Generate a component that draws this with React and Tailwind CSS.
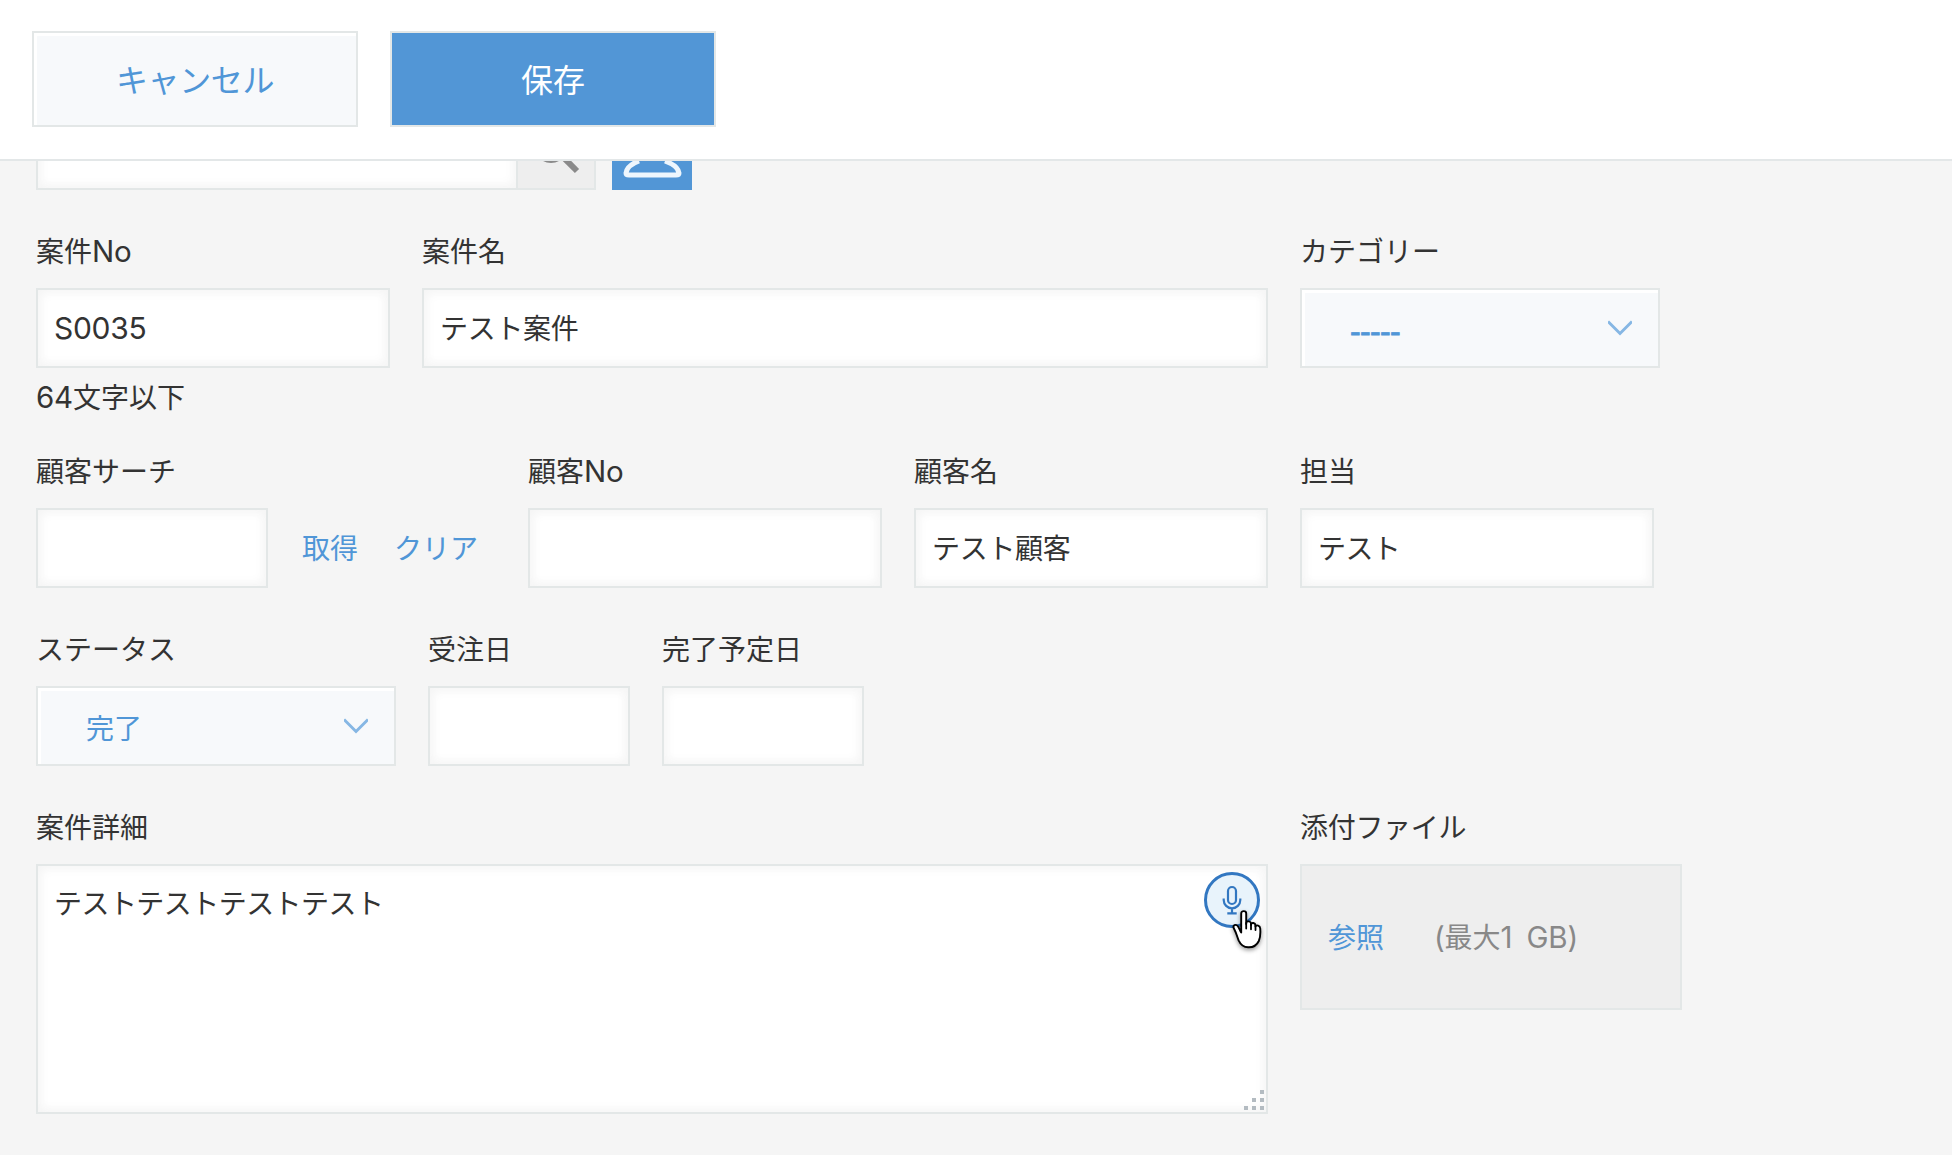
import clsx from 'clsx';

const box = 'border-2 border-[#e3e7e7] rounded-none outline-none';
const inputShadow = 'bg-white shadow-[inset_2px_2px_12px_#f5f5f5,inset_-2px_-2px_12px_#f5f5f5]';

function Field({ label, width, children }) {
  return (
    <div className={clsx('shrink-0', width)}>
      <label className="block h-[42px] leading-[40px] mb-4 whitespace-nowrap">{label}</label>
      {children}
    </div>
  );
}

function TextInput({ value = '', className }) {
  return (
    <input
      type="text"
      defaultValue={value}
      className={clsx(box, inputShadow, 'block w-full h-20 px-4', className || 'pb-[2px]')}
    />
  );
}

function Chevron() {
  return (
    <svg width="24" height="16" viewBox="0 0 24 16" fill="none" className="shrink-0">
      <path d="M0 1.5L12 13.5L24 1.5" stroke="#86b7e4" strokeWidth="3" />
    </svg>
  );
}

function Select({ children }) {
  return (
    <button className={clsx(box, 'w-full h-20 pl-12 pr-[26px] flex items-center justify-between bg-[#f7f9fb] text-[#5096d7] shadow-[inset_3px_3px_1px_#fff]')}>
      {children}
      <Chevron />
    </button>
  );
}

function Latin({ children }) {
  return <span className="font-['Inter'] text-[29.5px] tracking-[-0.2px] leading-none">{children}</span>;
}

function Mic() {
  return (
    <div className="absolute top-2 right-2 w-14 h-14 rounded-full border-[3px] border-[#3277c1] bg-[#e8f3fb]">
      <svg viewBox="0 0 50 50" className="w-full h-full" fill="none" stroke="#3277c1" strokeWidth="2.2">
        <rect x="21" y="12" width="8" height="17" rx="4" />
        <path d="M16.7 23.5V25a8.3 8.3 0 0 0 16.6 0V23.5M25 33.3V38.3M20.3 38.3H29.7" />
      </svg>
    </div>
  );
}

function HandCursor() {
  return (
    <svg
      viewBox="0 0 30 39"
      className="absolute top-[46px] right-[6px] w-[30px] h-[39px] overflow-visible drop-shadow-[0_2px_2px_rgba(0,0,0,0.4)]"
    >
      <path
        d="M9.2 22.5V3.4C9.2.3 14.2.3 14.2 3.4V14V12.6C14.8 10.7 18.8 11 19 13.4V15V14.2C19.7 12.3 23.2 12.8 23.5 15V16.4C24.5 14.6 28 15.4 28.2 18.2C28.6 22.8 28.6 27 26.8 31C24.6 35.6 20.8 37.5 16.2 37.3C11.4 37 8.5 34.5 6.6 30.3C5.2 27 4.6 23.6 1.8 18.3C.4 15.2 4 13.7 5.9 16.2C7.4 18.4 8 20.6 9.2 22.5Z"
        fill="#fff"
        stroke="#000"
        strokeWidth="1.9"
        strokeLinejoin="round"
      />
      <path d="M14.2 13V18.5M19 14V19.3M23.5 15.5V20" stroke="#000" strokeWidth="1.8" strokeLinecap="round" />
    </svg>
  );
}

// grip dots in the corner of the textarea
function ResizeGrip() {
  return (
    <svg viewBox="0 0 20 20" width="20" height="20" fill="#b3bbc1" className="absolute right-[4px] bottom-[4px]">
      <path d="M16 0h4v4h-4zM8 8h4v4H8zM16 8h4v4h-4zM0 16h4v4H0zM8 16h4v4H8zM16 16h4v4h-4z" />
    </svg>
  );
}

export default function App() {
  return (
    <div className="w-[1952px] h-[1155px] flex flex-col overflow-hidden bg-[#f5f5f5] text-[#333] text-[28px] font-['Noto_Sans_CJK_JP',sans-serif]">
      <header className="h-[161px] shrink-0 bg-white border-b-2 border-[#e3e7e8] flex gap-8 pl-8 pt-[31px]">
        <button className={clsx(box, 'w-[326px] h-24 pb-[2px] bg-[#f7f9fb] text-[#5096d7] text-[32px] tracking-[-0.4px] shadow-[inset_3px_3px_1px_#fff]')}>
          キャンセル
        </button>
        <button className={clsx(box, 'w-[326px] h-24 pb-[2px] bg-[#5296d6] text-white text-[32px]')}>保存</button>
      </header>

      <main className="flex-1 min-h-0 overflow-hidden pl-9">
        {/* lookup row, scrolled half way under the header */}
        <div className="-mt-[51px] flex gap-4">
          <div className="flex">
            <div className={clsx(box, inputShadow, 'w-[482px] h-20')} />
            <div className="w-[78px] h-20 bg-[#eee] border-2 border-l-0 border-[#e3e7e7]">
              <svg viewBox="0 0 76 76" className="w-full h-full" fill="none" stroke="#8a8a8a" strokeWidth="5">
                <circle cx="33" cy="34.5" r="14" />
                <path d="M43 43L59 59" strokeWidth="6" />
              </svg>
            </div>
          </div>
          <div className="w-20 h-20 bg-[#5296d6]">
            <svg viewBox="0 0 80 80" className="w-full h-full" fill="none" stroke="#eef6fd" strokeWidth="5">
              <circle cx="40" cy="34" r="13" />
              <path d="M27 51C19 54 14.5 58 14 63Q14 65 17 65H64Q67 65 67 63C66.5 58 61 54 53 51" strokeLinejoin="round" />
            </svg>
          </div>
        </div>

        <div className="mt-10 flex gap-8">
          <Field label={<>案件<Latin>No</Latin></>} width="w-[354px]">
            <TextInput value="S0035" className="font-['Inter'] text-[30px] tracking-[-0.3px]" />
            <p className="mt-2 h-[42px] leading-[40px]"><Latin>64</Latin>文字以下</p>
          </Field>
          <Field label="案件名" width="w-[846px]">
            <TextInput value="テスト案件" className="pb-[2px] tracking-[-0.3px]" />
          </Field>
          <Field label="カテゴリー" width="w-[360px]">
            <Select>
              <span className="font-['Liberation_Sans'] text-[32px] tracking-[-0.66px] pt-[5px] [-webkit-text-stroke:0.8px_#5096d7]">-----</span>
            </Select>
          </Field>
        </div>

        <div className="mt-8 flex">
          <Field label="顧客サーチ" width="w-[492px]">
            <div className="flex items-center">
              <TextInput className="max-w-[232px]" />
              <a className="ml-[34px] pb-[2px] text-[#5096d7] whitespace-nowrap">取得</a>
              <a className="ml-[36px] pb-[2px] text-[#5096d7] whitespace-nowrap">クリア</a>
            </div>
          </Field>
          <div className="flex gap-8">
            <Field label={<>顧客<Latin>No</Latin></>} width="w-[354px]">
              <TextInput />
            </Field>
            <Field label="顧客名" width="w-[354px]">
              <TextInput value="テスト顧客" className="pb-[2px] tracking-[-0.3px]" />
            </Field>
            <Field label="担当" width="w-[354px]">
              <TextInput value="テスト" className="pb-[2px] tracking-[-0.6px]" />
            </Field>
          </div>
        </div>

        <div className="mt-10 flex gap-8">
          <Field label="ステータス" width="w-[360px]">
            <Select>
              <span className="pt-[2px]">完了</span>
            </Select>
          </Field>
          <Field label="受注日" width="w-[202px]">
            <TextInput />
          </Field>
          <Field label="完了予定日" width="w-[202px]">
            <TextInput />
          </Field>
        </div>

        <div className="mt-10 flex gap-8">
          <Field label="案件詳細" width="w-[1232px]">
            <div className="relative">
              <textarea
                defaultValue="テストテストテストテスト"
                className={clsx(box, inputShadow, 'block w-full h-[250px] px-4 pt-[15px] leading-[42px] tracking-[-0.55px] resize-none')}
              />
              <Mic />
              <HandCursor />
              <ResizeGrip />
            </div>
          </Field>
          <Field label={<span className="tracking-[-0.3px]">添付ファイル</span>} width="w-[382px]">
            <div className="h-[146px] bg-[#eee] border-2 border-[#e3e7e7] flex items-center pl-[26px] pb-[2px]">
              <a className="text-[#5096d7]">参照</a>
              <span className="ml-[50px] text-[#888] whitespace-nowrap">
                <Latin>(</Latin>最大<Latin><span className="[word-spacing:6px]">1 GB)</span></Latin>
              </span>
            </div>
          </Field>
        </div>
      </main>
    </div>
  );
}
